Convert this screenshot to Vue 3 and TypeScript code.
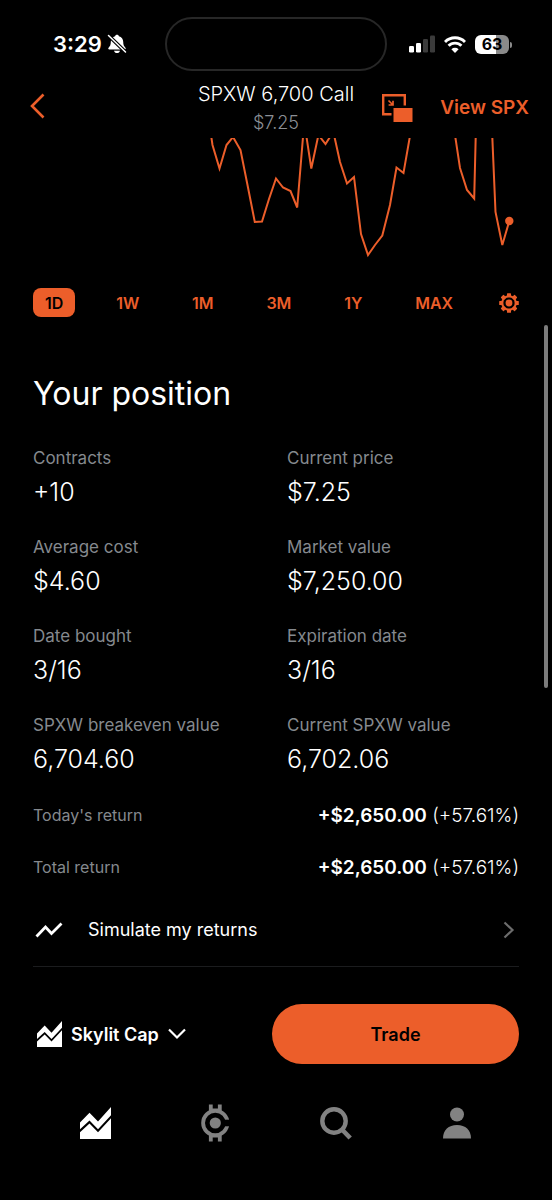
<script setup lang="ts">
import { ref } from 'vue'

interface Stat {
  label: string
  value: string
}
interface ReturnRow {
  label: string
  amount: string
  percent: string
}

const ranges: string[] = ['1D', '1W', '1M', '3M', '1Y', 'MAX']
const activeRange = ref('1D')

const stats: Stat[] = [
  { label: 'Contracts', value: '+10' },
  { label: 'Current price', value: '$7.25' },
  { label: 'Average cost', value: '$4.60' },
  { label: 'Market value', value: '$7,250.00' },
  { label: 'Date bought', value: '3/16' },
  { label: 'Expiration date', value: '3/16' },
  { label: 'SPXW breakeven value', value: '6,704.60' },
  { label: 'Current SPXW value', value: '6,702.06' },
]

const returns: ReturnRow[] = [
  { label: 'Today\'s return', amount: '+$2,650.00', percent: '(+57.61%)' },
  { label: 'Total return', amount: '+$2,650.00', percent: '(+57.61%)' },
]

const gearTeeth: number[] = [0, 45, 90, 135, 180, 225, 270, 315]
</script>

<template>
  <div class="screen">
    <div class="status">
      <div class="clock">
        <span>3:29</span>
        <svg width="20" height="20" viewBox="0 0 20 20" aria-hidden="true">
          <path d="M10 0.800c1 0 1.700.6 1.900 1.400 2.700.7 4.300 2.800 4.300 5.600 0 3.300.8 4.500 2.200 5.900.7.7.3 1.800-.8 1.800H2.400c-1.100 0-1.500-1.100-.8-1.800C3 12.300 3.800 11.100 3.800 7.800c0-2.800 1.600-4.900 4.300-5.600.2-.8.900-1.400 1.900-1.400z" fill="#fff" />
          <path d="M7 16.700h6c-.4 1.400-1.500 2.300-3 2.300s-2.600-.9-3-2.300z" fill="#fff" />
          <path d="M1.500 1.500l17 16.500" stroke="#000" stroke-width="3.800" />
          <path d="M1.500 1.500l17 16.500" stroke="#fff" stroke-width="1.500" stroke-linecap="round" />
        </svg>
      </div>
      <div class="island"></div>
      <div class="signals">
        <svg width="26" height="18" viewBox="0 0 26 18" aria-hidden="true">
          <rect x="0" y="11" width="5" height="6.500" rx="1.300" fill="#fff" />
          <rect x="7" y="8" width="5" height="9.500" rx="1.300" fill="#fff" />
          <rect x="14" y="4" width="5" height="13.500" rx="1.300" fill="#3b3b3b" />
          <rect x="21" y="0.500" width="5" height="17" rx="1.300" fill="#3b3b3b" />
        </svg>
        <svg width="22" height="17" viewBox="0 0 22 17" aria-hidden="true">
          <g fill="none" stroke="#fff" stroke-width="2.900">
            <path d="M1 6A14 14 0 0 1 21 6" />
            <path d="M4.600 9.800A9 9 0 0 1 17.400 9.800" />
          </g>
          <path d="M11 17L7.400 13.200A5.200 5.200 0 0 1 14.600 13.200z" fill="#fff" />
        </svg>
        <div class="battery">
          <span class="level">63</span>
          <i class="nub"></i>
        </div>
      </div>
    </div>

    <header class="header">
      <button class="icon-btn back" type="button" aria-label="Back">
        <svg width="16" height="26" viewBox="0 0 16 26"><path d="M13.500 1.500L2 13l11.500 11.500" fill="none" stroke="#ec5e2a" stroke-width="2.600" /></svg>
      </button>
      <div class="title">
        <h1>SPXW 6,700 Call</h1>
        <p>$7.25</p>
      </div>
      <div class="actions">
        <button class="icon-btn" type="button" aria-label="Picture in picture">
          <svg width="31" height="28" viewBox="0 0 31 28">
            <path d="M9.500 20.300H1.200V1.200h21.600V11.500" fill="none" stroke="#ec5e2a" stroke-width="2.400" />
            <rect x="11.500" y="14" width="19" height="14" fill="#ec5e2a" />
            <path d="M6.500 6.500l4 4M11 6.800V11H6.600" fill="none" stroke="#ec5e2a" stroke-width="1.700" />
          </svg>
        </button>
        <a class="view" href="#spx">View SPX</a>
      </div>
    </header>

    <svg class="chart" viewBox="0 138 552 120" role="img" aria-label="Option price today">
      <g fill="none" stroke="#ec5e2a" stroke-width="2" stroke-linejoin="miter">
        <path d="M211.300 137L212.500 145L219.500 168.500L226.500 145L233 137L240.500 150L247.500 185L254.800 222L262 221.500L269 199L276 178.500L283 187.500L290.500 191L297.200 207.500L303 137" />
        <path d="M306.500 137L311.300 168.500L318 137M320 137L325.500 144L330 137" />
        <path d="M334.500 137L340 162L347 183.500L354 177L361 234L368 255L375 245L382.300 235.500L390 205L396.500 167.500L403.500 173L409.800 137" />
        <path d="M455.300 137L460 168L467 190L474.200 198.500L475.700 137M492.300 137L495.500 212L502.300 245L509.300 221" />
      </g>
      <circle cx="509.300" cy="221" r="4.200" fill="#ec5e2a" />
    </svg>

    <main class="body">
      <div class="ranges">
        <button
          v-for="r in ranges"
          :key="r"
          type="button"
          class="range"
          :class="{ active: r === activeRange }"
          @click="activeRange = r"
        >{{ r }}</button>
        <button class="icon-btn gear" type="button" aria-label="Chart settings">
          <svg width="20" height="20" viewBox="-10 -10 20 20">
            <rect v-for="a in gearTeeth" :key="a" x="-2" y="-9.800" width="4" height="4" rx="0.600" fill="#ec5e2a" :transform="`rotate(${a})`" />
            <circle r="6.800" fill="none" stroke="#ec5e2a" stroke-width="2" />
            <circle r="3.400" fill="#ec5e2a" />
          </svg>
        </button>
      </div>

      <h2>Your position</h2>

      <dl class="stats">
        <div v-for="s in stats" :key="s.label">
          <dt>{{ s.label }}</dt>
          <dd>{{ s.value }}</dd>
        </div>
      </dl>

      <dl class="returns">
        <div v-for="r in returns" :key="r.label">
          <dt>{{ r.label }}</dt>
          <dd><strong>{{ r.amount }}</strong> {{ r.percent }}</dd>
        </div>
      </dl>

      <button class="simulate" type="button">
        <svg width="28" height="16" viewBox="0 0 28 16" aria-hidden="true"><path d="M1.500 14.500L10.500 5l6 6.500L26.500 1.500" fill="none" stroke="#fff" stroke-width="2.800" /></svg>
        <span>Simulate my returns</span>
        <svg width="12" height="18" viewBox="0 0 12 18" aria-hidden="true"><path d="M1.500 1.500L9.500 9l-8 7.500" fill="none" stroke="#6c6c6c" stroke-width="2.200" /></svg>
      </button>
    </main>

    <div class="trade-bar">
      <button class="account" type="button">
        <svg width="25" height="26" viewBox="0 0 31 31" preserveAspectRatio="none" aria-hidden="true">
          <path d="M0 15L9.500 5.500L18 14L31 0V8L18 21.500L9.500 13L0 21.500z" fill="#fff" />
          <path d="M0 24.500L9.500 16L18 24.500L31 11V31H0z" fill="#fff" />
        </svg>
        <span>Skylit Cap</span>
        <svg width="18" height="12" viewBox="0 0 18 12" aria-hidden="true"><path d="M1 1.500l8 8 8-8" fill="none" stroke="#fff" stroke-width="2.200" /></svg>
      </button>
      <button class="trade" type="button">Trade</button>
    </div>

    <nav class="nav">
      <a href="#investing" aria-label="Investing">
        <svg width="31" height="32" viewBox="0 0 31 31" preserveAspectRatio="none">
          <path d="M0 15L9.500 5.500L18 14L31 0V8L18 21.500L9.500 13L0 21.500z" fill="#fff" />
          <path d="M0 24.500L9.500 16L18 24.500L31 11V31H0z" fill="#fff" />
        </svg>
      </a>
      <a href="#crypto" aria-label="Crypto">
        <svg width="29" height="38" viewBox="0 0 29 38">
          <circle cx="14.300" cy="19" r="12.200" fill="none" stroke="#828282" stroke-width="3.800" />
          <rect x="21" y="15.700" width="8" height="6.600" fill="#000" />
          <path d="M9.800 0.500v6.500M18.800 0.500v6.500M9.800 31v6.500M18.800 31v6.500" stroke="#828282" stroke-width="3.800" />
          <path d="M9.800 5.500h9M9.800 32.500h9" stroke="#828282" stroke-width="2" />
          <circle cx="14.300" cy="19" r="5.600" fill="#828282" />
        </svg>
      </a>
      <a href="#search" aria-label="Search">
        <svg width="32" height="33" viewBox="0 0 32 33">
          <circle cx="14" cy="14" r="11.700" fill="none" stroke="#828282" stroke-width="4.400" />
          <path d="M21.500 22l8.700 9" stroke="#828282" stroke-width="4.600" />
        </svg>
      </a>
      <a href="#account" aria-label="Account">
        <svg width="28" height="32" viewBox="0 0 28 32">
          <circle cx="14" cy="7.500" r="7" fill="#828282" />
          <path d="M0 31.500C0 23 5.500 18 14 18s14 5 14 13.500z" fill="#828282" />
        </svg>
      </a>
    </nav>

    <i class="scroll-thumb"></i>
  </div>
</template>

<style>
body {
  background: #000;
}
</style>

<style scoped>
.screen {
  position: relative;
  min-height: 100vh;
  box-sizing: border-box;
  background: #000;
  color: #fff;
  font-family: Inter, "Liberation Sans", sans-serif;
  font-weight: 300;
  overflow: hidden;
}
button {
  font: inherit;
  color: inherit;
  background: none;
  border: 0;
  padding: 0;
  cursor: pointer;
}
a {
  color: inherit;
  text-decoration: none;
}
svg {
  display: block;
  flex: none;
}
h1, h2, p, dl, dt, dd {
  margin: 0;
  font-weight: inherit;
}
.status {
  display: grid;
  grid-template-columns: 1fr 222px 1fr;
  align-items: center;
  padding-top: 17px;
}
.island {
  height: 54px;
  box-sizing: border-box;
  border: 2px solid #272727;
  border-radius: 27px;
}
.clock {
  display: flex;
  align-items: center;
  gap: 5px;
  padding-left: 53px;
  font-size: 22px;
  font-weight: 600;
}
.signals {
  display: flex;
  align-items: center;
  justify-content: flex-end;
  gap: 9px;
  padding-right: 43px;
}
.battery {
  position: relative;
  width: 34px;
  height: 19px;
  border-radius: 6px;
  background: linear-gradient(90deg, #fff 62%, #8a8a8a 62%);
  color: #000;
  text-align: center;
}
.level {
  display: block;
  font-size: 16px;
  line-height: 19px;
  font-weight: 700;
}
.nub {
  position: absolute;
  right: -3px;
  top: 7px;
  width: 2px;
  height: 6px;
  border-radius: 0 2px 2px 0;
  background: #8a8a8a;
}
.header {
  display: grid;
  grid-template-columns: 1fr auto 1fr;
  align-items: center;
  height: 67px;
  padding: 0 23px;
}
.back {
  justify-self: start;
  padding: 2px 0 0 7px;
}
.title {
  padding-top: 9px;
  text-align: center;
}
.title h1 {
  font-size: 20px;
  line-height: 28px;
}
.title p {
  font-size: 18px;
  line-height: 30px;
  color: #8b8f95;
}
.actions {
  display: flex;
  align-items: center;
  justify-content: flex-end;
  gap: 27px;
  padding-top: 6px;
}
.view {
  color: #ec5e2a;
  font-size: 19px;
  font-weight: 600;
  white-space: nowrap;
}
.chart {
  width: 100%;
  height: auto;
}
.body {
  padding: 30px 33px 0;
}
.ranges {
  display: flex;
  align-items: center;
  justify-content: space-between;
}
.range {
  height: 29px;
  padding: 0 12px;
  border-radius: 8px;
  color: #ec5e2a;
  font-size: 16px;
  font-weight: 600;
}
.range.active {
  background: #ec5e2a;
  color: #000;
}
.gear {
  padding-left: 5px;
}
h2 {
  margin-top: 56px;
  font-size: 32px;
  line-height: 42px;
  font-weight: 400;
}
.stats {
  display: grid;
  grid-template-columns: 1fr 1fr;
  gap: 27px 22px;
  margin-top: 31px;
}
.stats dt {
  color: #85898e;
  font-size: 17px;
  line-height: 24px;
  font-weight: 400;
}
.stats dd {
  margin-top: 6px;
  font-size: 25px;
  line-height: 32px;
}
.returns {
  margin-top: 14px;
}
.returns div {
  display: flex;
  align-items: center;
  justify-content: space-between;
  height: 52px;
}
.returns dt {
  color: #85898e;
  font-size: 16px;
}
.returns dt {
  font-weight: 400;
}
.returns dd {
  font-size: 19px;
}
.returns strong {
  font-weight: 600;
}
.simulate {
  display: flex;
  align-items: center;
  width: 100%;
  height: 74px;
  padding: 0 4px 0 2px;
  border-bottom: 1px solid #1b1c1e;
}
.simulate span {
  flex: 1;
  margin-left: 25px;
  text-align: left;
  font-size: 18px;
  font-weight: 400;
}
.trade-bar {
  display: grid;
  grid-template-columns: 1fr 247px;
  align-items: center;
  margin-top: 37px;
  padding: 0 33px 0 37px;
}
.account {
  display: flex;
  align-items: center;
  gap: 9px;
  font-size: 18px;
  font-weight: 600;
}
.trade {
  height: 60px;
  border-radius: 30px;
  background: #ec5e2a;
  color: #000;
  font-size: 18px;
  font-weight: 600;
}
.nav {
  display: grid;
  grid-template-columns: repeat(4, 1fr);
  margin-top: 39px;
  padding: 0 35px;
}
.nav a {
  display: flex;
  align-items: center;
  justify-content: center;
  height: 40px;
}
.scroll-thumb {
  position: absolute;
  right: 4px;
  top: 325px;
  width: 4px;
  height: 363px;
  border-radius: 2px;
  background: #7c7c7c;
}
</style>
